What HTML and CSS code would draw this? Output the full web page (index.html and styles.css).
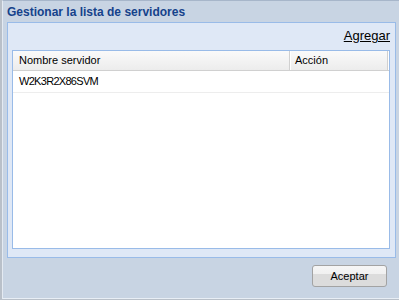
FILE: index.html
```html
<!DOCTYPE html>
<html>
<head>
    <title>Gestionar la lista de servidores</title>
    <link rel="stylesheet" href="styles.css">
</head>
<body>
    <div class="window">
        <div class="window-title">Gestionar la lista de servidores</div>
        <div class="panel">
            <div class="toolbar">
                <a href="#" class="add-link">Agregar</a>
            </div>
            <div class="grid">
                <div class="grid-header">
                    <div class="col col-name">Nombre servidor</div>
                    <div class="col col-action">Acción</div>
                </div>
                <div class="grid-row">
                    <div class="col col-name server-name">W2K3R2X86SVM</div>
                    <div class="col col-action"></div>
                </div>
            </div>
        </div>
        <div class="window-footer">
            <button type="button">Aceptar</button>
        </div>
    </div>
</body>
</html>
```

FILE: styles.css
```css
html, body {
    margin: 0;
    padding: 0;
    overflow: hidden;
}
body {
    background-color: #b9c0c9;
    font-family: "Liberation Sans", Arial, sans-serif;
    font-size: 11px;
}
.window {
    margin-left: 2px;
    width: 396px;
    height: 297px;
    background-color: #c8d4e3;
    border-top: 1px solid #a7b6ca;
    border-left: 1px solid #e4eaf2;
    border-bottom: 1px solid #e8eef5;
    box-shadow: 0 1px 0 #8d9db3;
}
.window-title {
    height: 21px;
    line-height: 22px;
    padding-left: 4px;
    color: #15428b;
    font-weight: bold;
    font-size: 12px;
}
.panel {
    margin: 0 3px 0 4px;
    height: 234px;
    background-color: #dfe8f6;
    border: 1px solid #99bbe8;
    padding: 0 5px 0 4px;
}
.toolbar {
    padding-top: 5px;
    height: 16px;
    line-height: 16px;
    text-align: right;
}
.add-link {
    color: #000;
    font-size: 13px;
    text-decoration: underline;
}
.grid {
    margin-top: 6px;
    height: 197px;
    background-color: #fff;
    border: 1px solid #99bbe8;
}
.grid-header {
    display: flex;
    height: 19px;
    line-height: 19px;
    background: linear-gradient(#fafafa, #ececec);
    border-bottom: 1px solid #d0d0d0;
}
.grid-row {
    display: flex;
    height: 21px;
    line-height: 21px;
    border-bottom: 1px solid #ededed;
}
.col {
    box-sizing: border-box;
    padding-left: 6px;
    white-space: nowrap;
}
.col-name {
    flex: 0 0 277px;
}
.col-action {
    flex: 0 0 98px;
    padding-left: 5px;
}
.server-name {
    letter-spacing: -0.7px;
}
.grid-header .col-name,
.grid-header .col-action {
    border-right: 1px solid #d0d0d0;
    box-shadow: 1px 0 0 #fff;
}
.window-footer {
    display: flex;
    justify-content: flex-end;
    padding: 7px 12px 0 0;
}
.window-footer button {
    width: 75px;
    height: 22px;
    padding: 0;
    font-family: "Liberation Sans", Arial, sans-serif;
    font-size: 11px;
    color: #000;
    border: 1px solid #a3a3a3;
    border-radius: 3px;
    background: linear-gradient(#f6f6f6 0, #f0f0f0 42%, #dcdcdc 42%, #dcdcdc 100%);
}
```
